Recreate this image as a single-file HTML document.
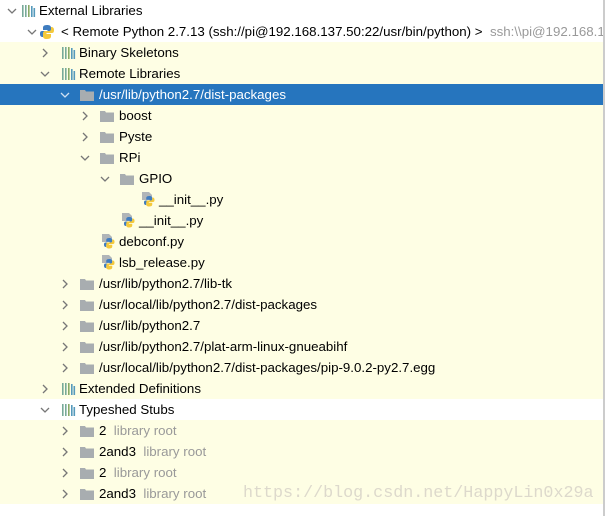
<!DOCTYPE html><html><head><style>
body{margin:0;width:605px;height:516px;overflow:hidden;background:#fff;font-family:"Liberation Sans","Noto Sans CJK SC",sans-serif;font-size:13.3px;color:#000;position:relative}
.r{position:absolute;left:0;width:603px;height:21px;line-height:21px;white-space:nowrap;overflow:hidden}
.y{background:#fefee4}
.s{background:#2675be;color:#fff}
.a{position:absolute;top:0;width:10px;height:21px}
.a svg{position:absolute;top:6px;left:0}
.i{position:absolute;top:4px}
.t{position:absolute;top:0}
.g{color:#999}
#border{position:absolute;right:0;top:0;width:2px;height:516px;background:#ccc}
</style></head><body>
<svg width="0" height="0" style="position:absolute"><defs>
<g id="dn"><path d="M1 3 L5 7 L9 3" fill="none" stroke="#777" stroke-width="1.3"/></g>
<g id="rt"><path d="M3 1 L7 5 L3 9" fill="none" stroke="#777" stroke-width="1.3"/></g>
<g id="dnw"><path d="M1 3 L5 7 L9 3" fill="none" stroke="#cfe0f2" stroke-width="1.3"/></g>
<g id="lib"><rect x="1" y="1" width="1.6" height="12" fill="#7a9"/><rect x="4" y="1" width="1.6" height="12" fill="#7a9"/><rect x="7" y="1" width="1.6" height="12" fill="#8a6"/><rect x="10" y="2" width="1.6" height="11" fill="#59b"/><rect x="12.5" y="4" width="1.6" height="9" fill="#59b"/></g>
<g id="fold"><path d="M0 2 H5 L6 3.5 H14 V13 H0Z" fill="#a8adb0"/></g>
<g id="py"><path d="M7 0 C3 0 3 2 3 3 V5 H7.5 V6 H2 C0 6 0 8 0 9 C0 12 2 12 3 12 V10 C3 8.5 4 8 5 8 H9 C10 8 11 7 11 6 V3 C11 1 10 0 7 0Z" fill="#3f7cbf"/><path d="M7 14 C11 14 11 12 11 11 V9 H6.5 V8 H12 C14 8 14 6 14 5 C14 2 12 2 11 2 V4 C11 5.5 10 6 9 6 H5 C4 6 3 7 3 8 V11 C3 13 4 14 7 14Z" fill="#f4c93b"/></g>
<g id="pf"><path d="M1 0 H8 L11 3 V8 H1Z" fill="#b0b5b8"/><g transform="translate(3,4) scale(0.75)"><use href="#py"/></g></g>
</defs></svg>

<div class="r" style="top:0"><span class="a" style="left:7px"><svg width="10" height="10"><use href="#dn"/></svg></span><svg class="i" style="left:21px" width="15" height="14"><use href="#lib"/></svg><span class="t" style="left:39px">External Libraries</span></div>
<div class="r" style="top:21px"><span class="a" style="left:27px"><svg width="10" height="10"><use href="#dn"/></svg></span><svg class="i" style="left:40px" width="14" height="14"><use href="#py"/></svg><span class="t" style="left:61px">&lt; Remote Python 2.7.13 (ssh://pi@192.168.137.50:22/usr/bin/python) &gt;&nbsp; <span class="g">ssh:\\pi@192.168.137.50</span></span></div>
<div class="r y" style="top:42px"><span class="a" style="left:40px"><svg width="10" height="10"><use href="#rt"/></svg></span><svg class="i" style="left:61px" width="15" height="14"><use href="#lib"/></svg><span class="t" style="left:79px">Binary Skeletons</span></div>
<div class="r y" style="top:63px"><span class="a" style="left:40px"><svg width="10" height="10"><use href="#dn"/></svg></span><svg class="i" style="left:61px" width="15" height="14"><use href="#lib"/></svg><span class="t" style="left:79px">Remote Libraries</span></div>
<div class="r s" style="top:84px"><span class="a" style="left:60px"><svg width="10" height="10"><use href="#dnw"/></svg></span><svg class="i" style="left:80px" width="14" height="14"><use href="#fold"/></svg><span class="t" style="left:99px">/usr/lib/python2.7/dist-packages</span></div>
<div class="r y" style="top:105px"><span class="a" style="left:80px"><svg width="10" height="10"><use href="#rt"/></svg></span><svg class="i" style="left:100px" width="14" height="14"><use href="#fold"/></svg><span class="t" style="left:119px">boost</span></div>
<div class="r y" style="top:126px"><span class="a" style="left:80px"><svg width="10" height="10"><use href="#rt"/></svg></span><svg class="i" style="left:100px" width="14" height="14"><use href="#fold"/></svg><span class="t" style="left:119px">Pyste</span></div>
<div class="r y" style="top:147px"><span class="a" style="left:80px"><svg width="10" height="10"><use href="#dn"/></svg></span><svg class="i" style="left:100px" width="14" height="14"><use href="#fold"/></svg><span class="t" style="left:119px">RPi</span></div>
<div class="r y" style="top:168px"><span class="a" style="left:100px"><svg width="10" height="10"><use href="#dn"/></svg></span><svg class="i" style="left:120px" width="14" height="14"><use href="#fold"/></svg><span class="t" style="left:139px">GPIO</span></div>
<div class="r y" style="top:189px"><svg class="i" style="left:141px;top:3px" width="14" height="15"><use href="#pf"/></svg><span class="t" style="left:159px">__init__.py</span></div>
<div class="r y" style="top:210px"><svg class="i" style="left:121px;top:3px" width="14" height="15"><use href="#pf"/></svg><span class="t" style="left:139px">__init__.py</span></div>
<div class="r y" style="top:231px"><svg class="i" style="left:101px;top:3px" width="14" height="15"><use href="#pf"/></svg><span class="t" style="left:119px">debconf.py</span></div>
<div class="r y" style="top:252px"><svg class="i" style="left:101px;top:3px" width="14" height="15"><use href="#pf"/></svg><span class="t" style="left:119px">lsb_release.py</span></div>
<div class="r y" style="top:273px"><span class="a" style="left:60px"><svg width="10" height="10"><use href="#rt"/></svg></span><svg class="i" style="left:80px" width="14" height="14"><use href="#fold"/></svg><span class="t" style="left:99px">/usr/lib/python2.7/lib-tk</span></div>
<div class="r y" style="top:294px"><span class="a" style="left:60px"><svg width="10" height="10"><use href="#rt"/></svg></span><svg class="i" style="left:80px" width="14" height="14"><use href="#fold"/></svg><span class="t" style="left:99px">/usr/local/lib/python2.7/dist-packages</span></div>
<div class="r y" style="top:315px"><span class="a" style="left:60px"><svg width="10" height="10"><use href="#rt"/></svg></span><svg class="i" style="left:80px" width="14" height="14"><use href="#fold"/></svg><span class="t" style="left:99px">/usr/lib/python2.7</span></div>
<div class="r y" style="top:336px"><span class="a" style="left:60px"><svg width="10" height="10"><use href="#rt"/></svg></span><svg class="i" style="left:80px" width="14" height="14"><use href="#fold"/></svg><span class="t" style="left:99px">/usr/lib/python2.7/plat-arm-linux-gnueabihf</span></div>
<div class="r y" style="top:357px"><span class="a" style="left:60px"><svg width="10" height="10"><use href="#rt"/></svg></span><svg class="i" style="left:80px" width="14" height="14"><use href="#fold"/></svg><span class="t" style="left:99px">/usr/local/lib/python2.7/dist-packages/pip-9.0.2-py2.7.egg</span></div>
<div class="r y" style="top:378px"><span class="a" style="left:40px"><svg width="10" height="10"><use href="#rt"/></svg></span><svg class="i" style="left:61px" width="15" height="14"><use href="#lib"/></svg><span class="t" style="left:79px">Extended Definitions</span></div>
<div class="r" style="top:399px"><span class="a" style="left:40px"><svg width="10" height="10"><use href="#dn"/></svg></span><svg class="i" style="left:61px" width="15" height="14"><use href="#lib"/></svg><span class="t" style="left:79px">Typeshed Stubs</span></div>
<div class="r y" style="top:420px"><span class="a" style="left:60px"><svg width="10" height="10"><use href="#rt"/></svg></span><svg class="i" style="left:80px" width="14" height="14"><use href="#fold"/></svg><span class="t" style="left:99px">2&nbsp; <span class="g">library root</span></span></div>
<div class="r y" style="top:441px"><span class="a" style="left:60px"><svg width="10" height="10"><use href="#rt"/></svg></span><svg class="i" style="left:80px" width="14" height="14"><use href="#fold"/></svg><span class="t" style="left:99px">2and3&nbsp; <span class="g">library root</span></span></div>
<div class="r y" style="top:462px"><span class="a" style="left:60px"><svg width="10" height="10"><use href="#rt"/></svg></span><svg class="i" style="left:80px" width="14" height="14"><use href="#fold"/></svg><span class="t" style="left:99px">2&nbsp; <span class="g">library root</span></span></div>
<div class="r y" style="top:483px"><span class="a" style="left:60px"><svg width="10" height="10"><use href="#rt"/></svg></span><svg class="i" style="left:80px" width="14" height="14"><use href="#fold"/></svg><span class="t" style="left:99px">2and3&nbsp; <span class="g">library root</span></span></div>
<div style="position:absolute;left:243px;top:484px;font-family:'Liberation Mono',monospace;font-size:16.7px;color:#ddd9cc;white-space:nowrap">https://blog.csdn.net/HappyLin0x29a</div>
<div id="border"></div>
</body></html>
